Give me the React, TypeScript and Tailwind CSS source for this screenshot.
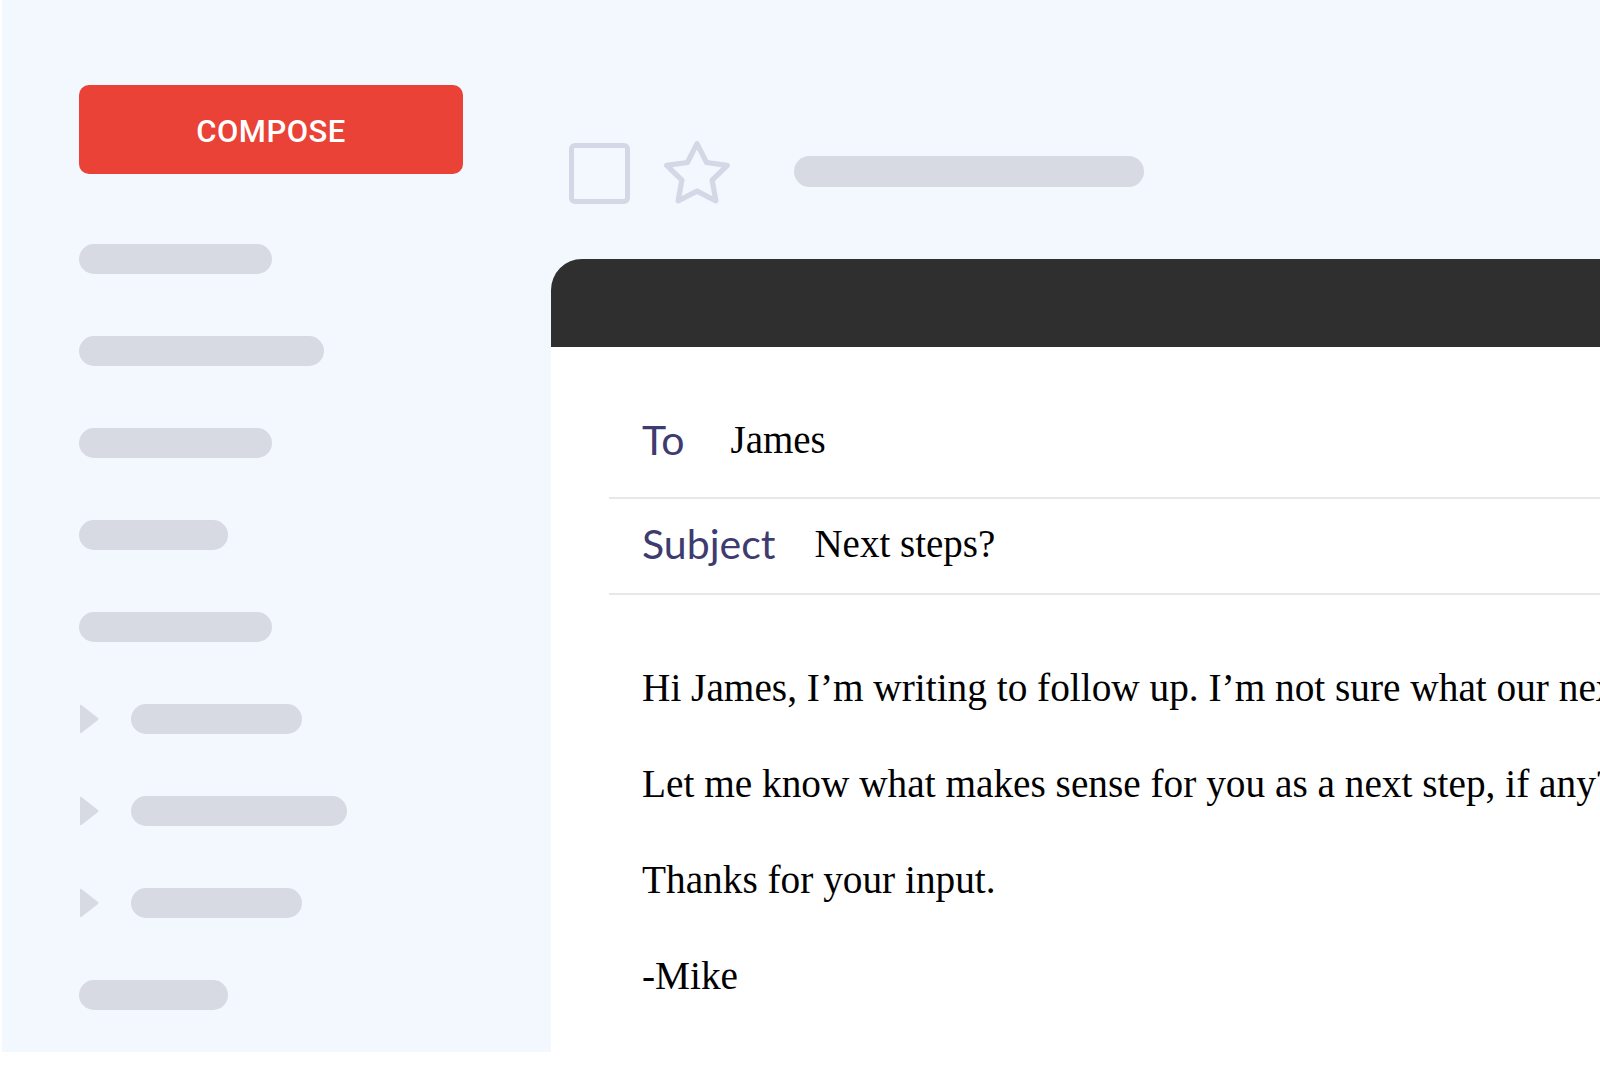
import { useState } from 'react';

const barColor = 'bg-[#d7dae3]';

const navItems = [
  { width: 'w-[193px]', caret: false },
  { width: 'w-[245px]', caret: false },
  { width: 'w-[193px]', caret: false },
  { width: 'w-[149px]', caret: false },
  { width: 'w-[193px]', caret: false },
  { width: 'w-[171px]', caret: true },
  { width: 'w-[216px]', caret: true },
  { width: 'w-[171px]', caret: true },
  { width: 'w-[149px]', caret: false },
];

const Caret = () => (
  <svg width="20" height="30" viewBox="0 0 20 30" className="shrink-0">
    <path d="M1 2 Q1 0 3 1.5 L19 14 Q20 15 19 16 L3 28.5 Q1 30 1 28 Z" fill="#d7dae3" />
  </svg>
);

const StarOutline = () => (
  <svg width="68" height="68" viewBox="1 1 22 22" className="shrink-0">
    <polygon
      points="12,2.5 15.09,8.6 21.8,9.55 16.9,14.3 18.1,21 12,17.85 5.9,21 7.1,14.3 2.2,9.55 8.91,8.6"
      fill="none"
      stroke="#d4d7e5"
      strokeWidth="1.7"
      strokeLinejoin="round"
    />
  </svg>
);

const Sidebar = () => (
  <aside className="w-[549px] shrink-0 pl-[77px] pt-[85px]">
    <button className="w-[384px] h-[89px] pt-[5px] rounded-[10px] bg-[#ea4236] text-white text-[31px] font-medium tracking-[0.5px] font-['Roboto',sans-serif]">
      COMPOSE
    </button>
    <nav className="mt-[70px] flex flex-col gap-[62px]">
      {navItems.map((item, i) => (
        <div key={i} className="flex items-center h-[30px]">
          {item.caret && (
            <>
              <Caret />
              <div className="w-[32px]" />
            </>
          )}
          <div className={`${item.width} h-[30px] rounded-full ${barColor}`} />
        </div>
      ))}
    </nav>
  </aside>
);

const Field = ({ label, value, gap, row }: { label: string; value: string; gap: string; row: string }) => (
  <div className={`flex items-center ${row} border-b-2 border-[#e6e8ec] pl-[33px]`}>
    <span className={`font-['Lato',sans-serif] text-[41px] text-[#3d3b6f] ${gap}`}>{label}</span>
    <span className="font-['Liberation_Serif',serif] text-[39px] text-black">{value}</span>
  </div>
);

export default function App() {
  const [checked] = useState(false);

  return (
    <div className="w-[1600px] h-[1076px] bg-white overflow-hidden">
      <div className="ml-[2px] h-[1052px] bg-[#f3f7fe] flex">
        <Sidebar />

        <main className="flex-1 min-w-0 flex flex-col pt-[141px] overflow-hidden">
          {/* toolbar */}
          <div className="flex items-center h-[64px] pl-[18px]">
            <div
              className={`w-[61px] h-[61px] rounded-[6px] border-[5px] border-[#d4d7e5] ${checked ? 'bg-[#d4d7e5]' : ''}`}
            />
            <div className="ml-[33px]">
              <StarOutline />
            </div>
            <div className={`ml-[63px] mb-[4px] w-[350px] h-[31px] rounded-full ${barColor}`} />
          </div>

          {/* compose window */}
          <div className="mt-[54px] h-[88px] bg-[#2f2f2f] rounded-tl-[31px] shrink-0" />
          <div className="flex-1 bg-white pl-[58px] overflow-hidden">
            <div className="pt-[36px]">
              <Field label="To" value="James" gap="mr-[46px]" row="h-[116px]" />
              <Field label="Subject" value="Next steps?" gap="mr-[39px]" row="h-[96px] pb-[4px]" />
            </div>
            <div className="pl-[33px] pt-[71px] flex flex-col gap-[52px] font-['Liberation_Serif',serif] text-[39.3px] leading-[44px] text-black whitespace-nowrap">
              <p>Hi James, I’m writing to follow up. I’m not sure what our next steps are.</p>
              <p>Let me know what makes sense for you as a next step, if any?</p>
              <p>Thanks for your input.</p>
              <p>-Mike</p>
            </div>
          </div>
        </main>
      </div>
    </div>
  );
}
